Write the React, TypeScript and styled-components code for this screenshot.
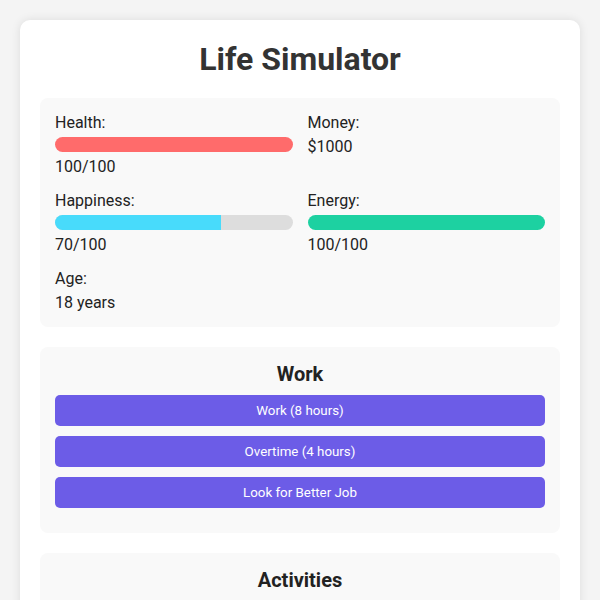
import styled, { createGlobalStyle } from "styled-components";

const GlobalStyle = createGlobalStyle`
  body {
    margin: 0;
    padding: 20px;
    background-color: #f4f4f4;
    font-family: Roboto, "Liberation Sans", Arial, sans-serif;
    color: #333;
  }
`;

type Stat = {
  label: string;
  value: string;
  percent?: number;
  color?: string;
};

const stats: Stat[] = [
  { label: "Health:", value: "100/100", percent: 100, color: "#ff6b6b" },
  { label: "Money:", value: "$1000" },
  { label: "Happiness:", value: "70/100", percent: 70, color: "#48dbfb" },
  { label: "Energy:", value: "100/100", percent: 100, color: "#1dd1a1" },
  { label: "Age:", value: "18 years" },
];

const sections = [
  {
    title: "Work",
    actions: ["Work (8 hours)", "Overtime (4 hours)", "Look for Better Job"],
  },
  {
    title: "Activities",
    actions: ["Exercise (2 hours)", "Socialize (3 hours)", "Rest (8 hours)"],
  },
];

const App = () => {
  return (
    <>
      <GlobalStyle />
      <Card>
        <Title>Life Simulator</Title>
        <StatsPanel>
          {stats.map((stat) => (
            <StatItem key={stat.label}>
              <StatLabel>{stat.label}</StatLabel>
              {stat.percent !== undefined && (
                <Track>
                  <Fill color={stat.color} style={{ width: `${stat.percent}%` }} />
                </Track>
              )}
              <StatValue>{stat.value}</StatValue>
            </StatItem>
          ))}
        </StatsPanel>

        {sections.map((section) => (
          <Section key={section.title}>
            <SectionTitle>{section.title}</SectionTitle>
            {section.actions.map((action) => (
              <ActionButton key={action}>{action}</ActionButton>
            ))}
          </Section>
        ))}
      </Card>
    </>
  );
};

export default App;

const Card = styled.div`
  background-color: #ffffff;
  border-radius: 10px;
  padding: 20px;
  box-shadow: 0 0 10px rgba(0, 0, 0, 0.1);
`;

const Title = styled.h1`
  margin: 0 0 20px 0;
  text-align: center;
  font-size: 32px;
  font-weight: 700;
  color: #333;
`;

const StatsPanel = styled.div`
  display: grid;
  grid-template-columns: 1fr 1fr;
  gap: 15px;
  padding: 15px;
  margin-bottom: 20px;
  background-color: #f9f9f9;
  border-radius: 8px;
`;

const StatItem = styled.div`
  font-size: 16px;
  color: #222;
`;

const StatLabel = styled.div`
  margin: 0;
`;

const StatValue = styled.div`
  margin-top: 5px;
`;

const Track = styled.div`
  height: 15px;
  margin: 5px 0;
  background-color: #dddddd;
  border-radius: 10px;
  overflow: hidden;
`;

const Fill = styled.div<{ color?: string }>`
  height: 100%;
  background-color: ${(p) => p.color};
`;

const Section = styled.div`
  padding: 15px;
  margin-bottom: 20px;
  background-color: #f9f9f9;
  border-radius: 8px;
`;

const SectionTitle = styled.h3`
  margin: 0 0 9px 0;
  text-align: center;
  font-size: 20px;
  font-weight: 700;
  color: #222;
`;

const ActionButton = styled.button`
  display: block;
  width: 100%;
  margin-bottom: 10px;
  padding: 8px 10px;
  border: none;
  border-radius: 5px;
  background-color: #6c5ce7;
  color: #ffffff;
  font-family: Roboto, "Liberation Sans", Arial, sans-serif;
  font-size: 13.333px;
  line-height: 15px;
  cursor: pointer;
`;
